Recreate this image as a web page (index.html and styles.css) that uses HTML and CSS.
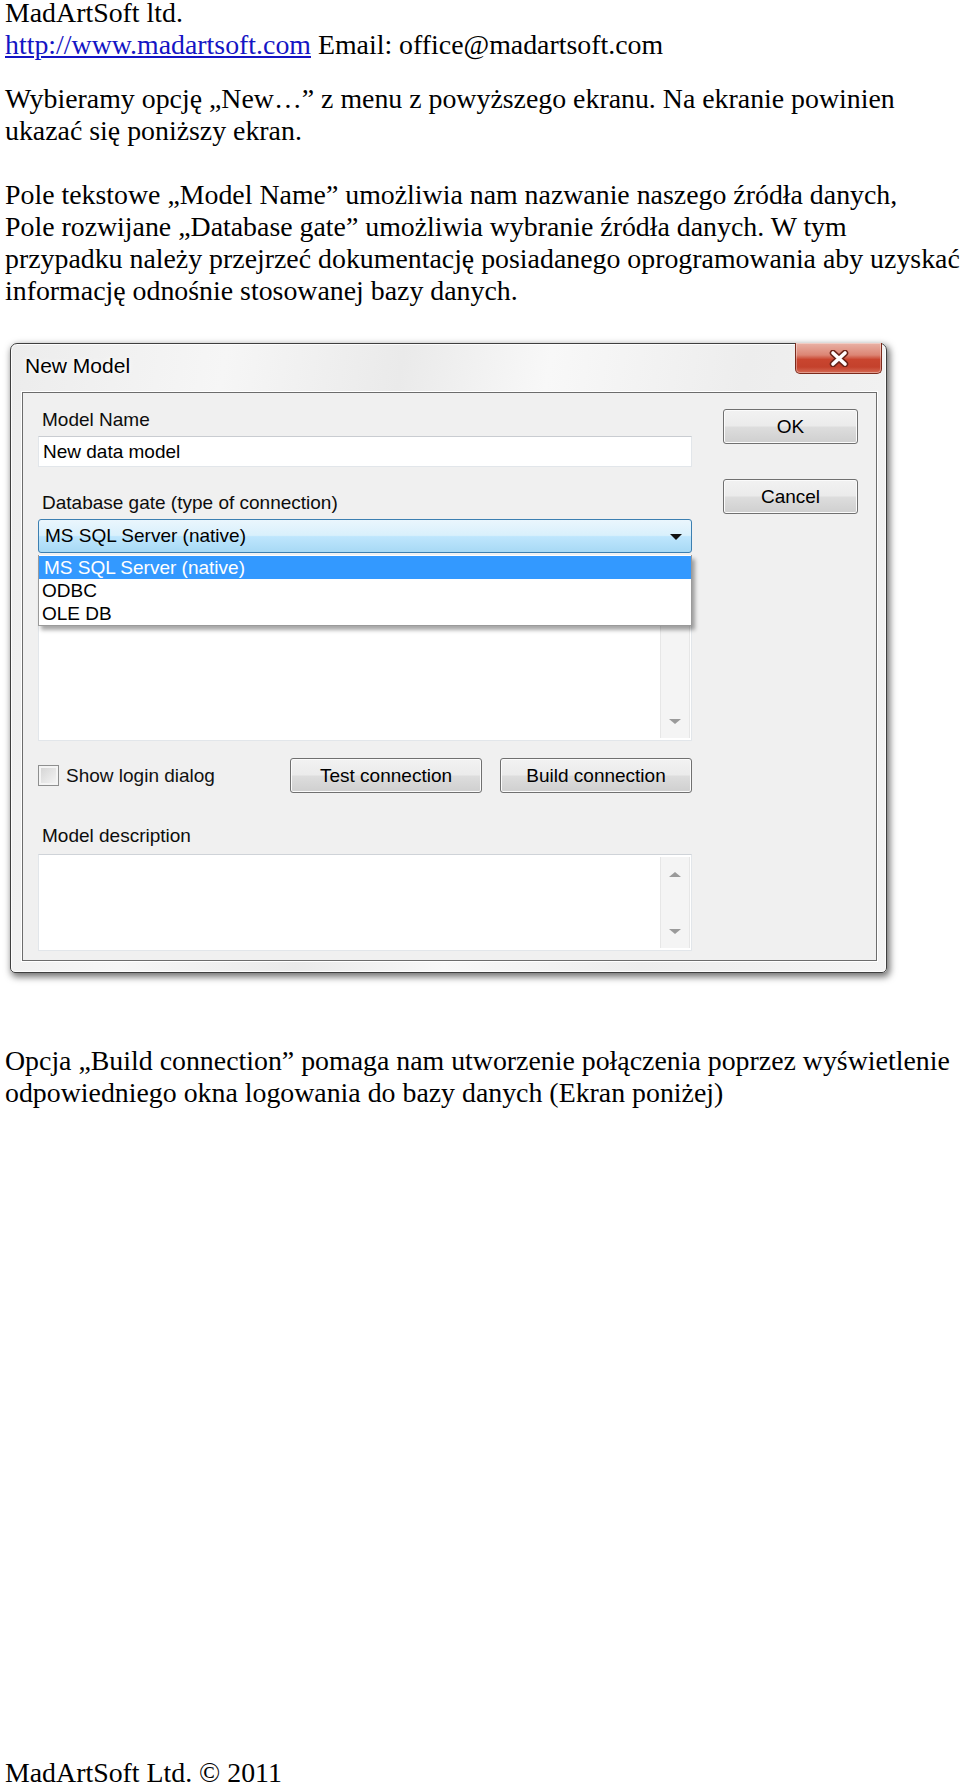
FILE: index.html
```html
<!DOCTYPE html>
<html lang="pl">
<head>
<meta charset="utf-8">
<title>MadArtSoft ltd.</title>
<link rel="stylesheet" href="styles.css">
</head>
<body>
<div class="page">
  <div class="doc-head">
    <div class="head-line-first">MadArtSoft ltd.</div>
    <div class="head-line"><a class="link" href="#">http://www.madartsoft.com</a> Email: office@madartsoft.com</div>
  </div>

  <p class="para para-first">Wybieramy opcję „New…” z menu z powyższego ekranu. Na ekranie powinien<br>ukazać się poniższy ekran.</p>

  <p class="para para-blank">Pole tekstowe „Model Name” umożliwia nam nazwanie naszego źródła danych,<br>Pole rozwijane „Database gate” umożliwia wybranie źródła danych. W tym<br>przypadku należy przejrzeć dokumentację posiadanego oprogramowania aby uzyskać<br>informację odnośnie stosowanej bazy danych.</p>

  <div class="window">
    <div class="titlebar">
      <span class="title">New Model</span>
      <span class="close-btn">
        <svg width="20" height="17" viewBox="0 0 20 17" aria-hidden="true">
          <path d="M4 3 L16 14 M16 3 L4 14" stroke="#6b2418" stroke-width="6.5" stroke-linecap="round" fill="none"/>
          <path d="M4 3 L16 14 M16 3 L4 14" stroke="#ffffff" stroke-width="3.6" stroke-linecap="round" fill="none"/>
        </svg>
      </span>
    </div>
    <div class="client">
      <div class="col-main">
        <div class="label">Model Name</div>
        <div class="edit">New data model</div>

        <div class="label label-gap">Database gate (type of connection)</div>
        <div class="combo-wrap">
          <div class="combo">
            <span>MS SQL Server (native)</span>
            <span class="combo-arrow"></span>
          </div>
          <div class="droplist">
            <div class="drop-item selected">MS SQL Server (native)</div>
            <div class="drop-item">ODBC</div>
            <div class="drop-item">OLE DB</div>
          </div>
        </div>

        <div class="memo memo-params">
          <div class="memo-body"></div>
          <div class="scrollbar">
            <span class="arrow-up"></span>
            <span class="arrow-down"></span>
          </div>
        </div>

        <div class="action-row">
          <div class="check-group">
            <span class="checkbox"></span>
            <span class="check-label">Show login dialog</span>
          </div>
          <div class="btn btn-wide">Test connection</div>
          <div class="btn btn-wide">Build connection</div>
        </div>

        <div class="label label-desc">Model description</div>
        <div class="memo memo-desc">
          <div class="memo-body"></div>
          <div class="scrollbar">
            <span class="arrow-up"></span>
            <span class="arrow-down"></span>
          </div>
        </div>
      </div>
      <div class="col-side">
        <div class="btn btn-side">OK</div>
        <div class="btn btn-side btn-cancel">Cancel</div>
      </div>
    </div>
  </div>

  <p class="para para-after">Opcja „Build connection” pomaga nam utworzenie połączenia poprzez wyświetlenie<br>odpowiedniego okna logowania do bazy danych (Ekran poniżej)</p>

  <div class="footer">MadArtSoft Ltd. © 2011</div>
</div>
</body>
</html>
```

FILE: styles.css
```css
html, body {
  margin: 0;
  padding: 0;
  background: #ffffff;
  overflow: hidden;
}

.page {
  height: 1785px;
  overflow: hidden;
  display: flex;
  flex-direction: column;
  padding-left: 5px;
  box-sizing: border-box;
  font-family: "Liberation Serif", "Times New Roman", serif;
  font-size: 27.85px;
  line-height: 32px;
  color: #000000;
}

.doc-head {
  white-space: nowrap;
}

.head-line-first {
  line-height: 26px;
}

.head-line {
  margin-top: 3px;
}

.link {
  color: #1414c4;
  text-decoration: underline;
}

.para {
  margin: 0;
  white-space: nowrap;
}

.para-first {
  margin-top: 22px;
}

.para-blank {
  margin-top: 32px;
}

.para-after {
  margin-top: 72px;
}

.footer {
  margin-top: auto;
  line-height: 24px;
  white-space: nowrap;
}

/* ---------- dialog window ---------- */

.window {
  margin-top: 36px;
  margin-left: 5px;
  width: 877px;
  height: 630px;
  box-sizing: border-box;
  border: 1px solid #3f3f3f;
  border-radius: 7px 7px 5px 5px;
  background: linear-gradient(100deg, #ececec 0%, #f6f6f6 22%, #eaeaea 40%, #f8f8f8 55%, #ededed 75%, #f4f4f4 100%);
  box-shadow: inset 0 0 0 1px rgba(255,255,255,0.85), 2px 3px 7px 1px rgba(0,0,0,0.55);
  display: flex;
  flex-direction: column;
  font-family: "Liberation Sans", Arial, sans-serif;
  font-size: 19px;
  line-height: 22px;
  color: #111111;
}

.titlebar {
  height: 48px;
  display: flex;
  justify-content: space-between;
  align-items: flex-start;
  flex-shrink: 0;
}

.title {
  margin-top: 10px;
  margin-left: 14px;
  font-size: 21px;
  line-height: 24px;
  color: #000000;
  text-shadow: 0 0 6px #ffffff, 0 0 3px #ffffff;
}

.close-btn {
  margin-top: -1px;
  margin-right: 4px;
  width: 87px;
  height: 31px;
  box-sizing: border-box;
  border: 1px solid #7c2a1c;
  border-top: none;
  border-radius: 0 0 5px 5px;
  background: linear-gradient(#e9b2a6 0%, #dc8574 40%, #c9452f 55%, #c4412c 80%, #d66b55 100%);
  box-shadow: inset 0 0 0 1px rgba(255,255,255,0.35);
  display: flex;
  align-items: center;
  justify-content: center;
}

.client {
  margin: 0 9px 11px 11px;
  flex: 1;
  box-sizing: border-box;
  border: 1px solid #6c6c6c;
  box-shadow: 0 0 0 1px #ffffff;
  background: #f0f0f0;
  display: flex;
  gap: 31px;
  padding: 16px 0 0 15px;
}

.col-main {
  width: 654px;
  display: flex;
  flex-direction: column;
}

.col-side {
  width: 135px;
  display: flex;
  flex-direction: column;
}

.label {
  padding-left: 4px;
  height: 22px;
  white-space: nowrap;
  color: #0c0c0c;
}

.label-gap {
  margin-top: 25px;
}

.label-desc {
  margin-top: 32px;
}

.edit {
  margin-top: 5px;
  height: 31px;
  box-sizing: border-box;
  border: 1px solid #e2e6ea;
  border-top-color: #c9ccd1;
  background: #ffffff;
  padding: 0 4px;
  line-height: 29px;
  color: #000000;
}

/* combo box with its open list */

.combo-wrap {
  position: relative;
  margin-top: 5px;
}

.combo {
  height: 34px;
  box-sizing: border-box;
  border: 1px solid #3c7fb1;
  border-radius: 3px;
  background: linear-gradient(#eaf6fd 0%, #d9f0fc 48%, #bee6fd 52%, #a7d9f5 100%);
  padding: 0 9px 0 6px;
  line-height: 32px;
  color: #000000;
  display: flex;
  justify-content: space-between;
  align-items: center;
}

.combo-arrow {
  width: 0;
  height: 0;
  border-left: 6px solid transparent;
  border-right: 6px solid transparent;
  border-top: 6px solid #111111;
  margin-top: 2px;
}

.droplist {
  position: absolute;
  left: 0;
  right: 0;
  top: 36px;
  z-index: 2;
  background: #ffffff;
  border: 1px solid #9a9a9a;
  border-top: none;
  padding-top: 1px;
  box-shadow: 3px 4px 4px rgba(0,0,0,0.35);
}

.drop-item {
  height: 23px;
  line-height: 23px;
  padding-left: 3px;
  color: #000000;
}

.drop-item.selected {
  background: #3399ff;
  color: #ffffff;
  padding-left: 5px;
}

/* memo boxes */

.memo {
  display: flex;
  box-sizing: border-box;
  border: 1px solid #e2e6ea;
  border-top-color: #cfd3d8;
  background: #ffffff;
}

.memo-params {
  margin-top: 6px;
  height: 182px;
}

.memo-desc {
  margin-top: 7px;
  height: 97px;
}

.memo-body {
  flex: 1;
}

.scrollbar {
  width: 28px;
  margin: 2px 1px 2px 0;
  background: #f4f4f4;
  border-left: 1px solid #e6e6e6;
  border-right: 1px solid #e6e6e6;
  display: flex;
  flex-direction: column;
  justify-content: space-between;
  align-items: center;
  padding: 15px 0 14px;
}

.arrow-up {
  width: 0;
  height: 0;
  border-left: 6px solid transparent;
  border-right: 6px solid transparent;
  border-bottom: 5px solid #9a9a9a;
}

.arrow-down {
  width: 0;
  height: 0;
  border-left: 6px solid transparent;
  border-right: 6px solid transparent;
  border-top: 5px solid #9a9a9a;
}

/* checkbox + buttons row */

.action-row {
  margin-top: 17px;
  display: flex;
  align-items: center;
  gap: 18px;
}

.check-group {
  flex: 1;
  display: flex;
  align-items: center;
  gap: 7px;
}

.checkbox {
  width: 21px;
  height: 21px;
  box-sizing: border-box;
  border: 1px solid #8e8f8f;
  background: linear-gradient(135deg, #d2d2d2 0%, #e8e8e8 60%, #f6f6f6 100%);
  box-shadow: inset 0 0 0 2px #f4f4f4;
}

.check-label {
  white-space: nowrap;
}

.btn {
  box-sizing: border-box;
  height: 35px;
  border: 1px solid #707070;
  border-radius: 3px;
  background: linear-gradient(#f2f2f2 0%, #ebebeb 48%, #dddddd 52%, #cfcfcf 100%);
  box-shadow: inset 0 0 0 1px #fbfbfb;
  text-align: center;
  line-height: 33px;
  color: #000000;
  white-space: nowrap;
}

.btn-wide {
  width: 192px;
}

.btn-side {
  width: 135px;
}

.btn-cancel {
  margin-top: 35px;
}
```
